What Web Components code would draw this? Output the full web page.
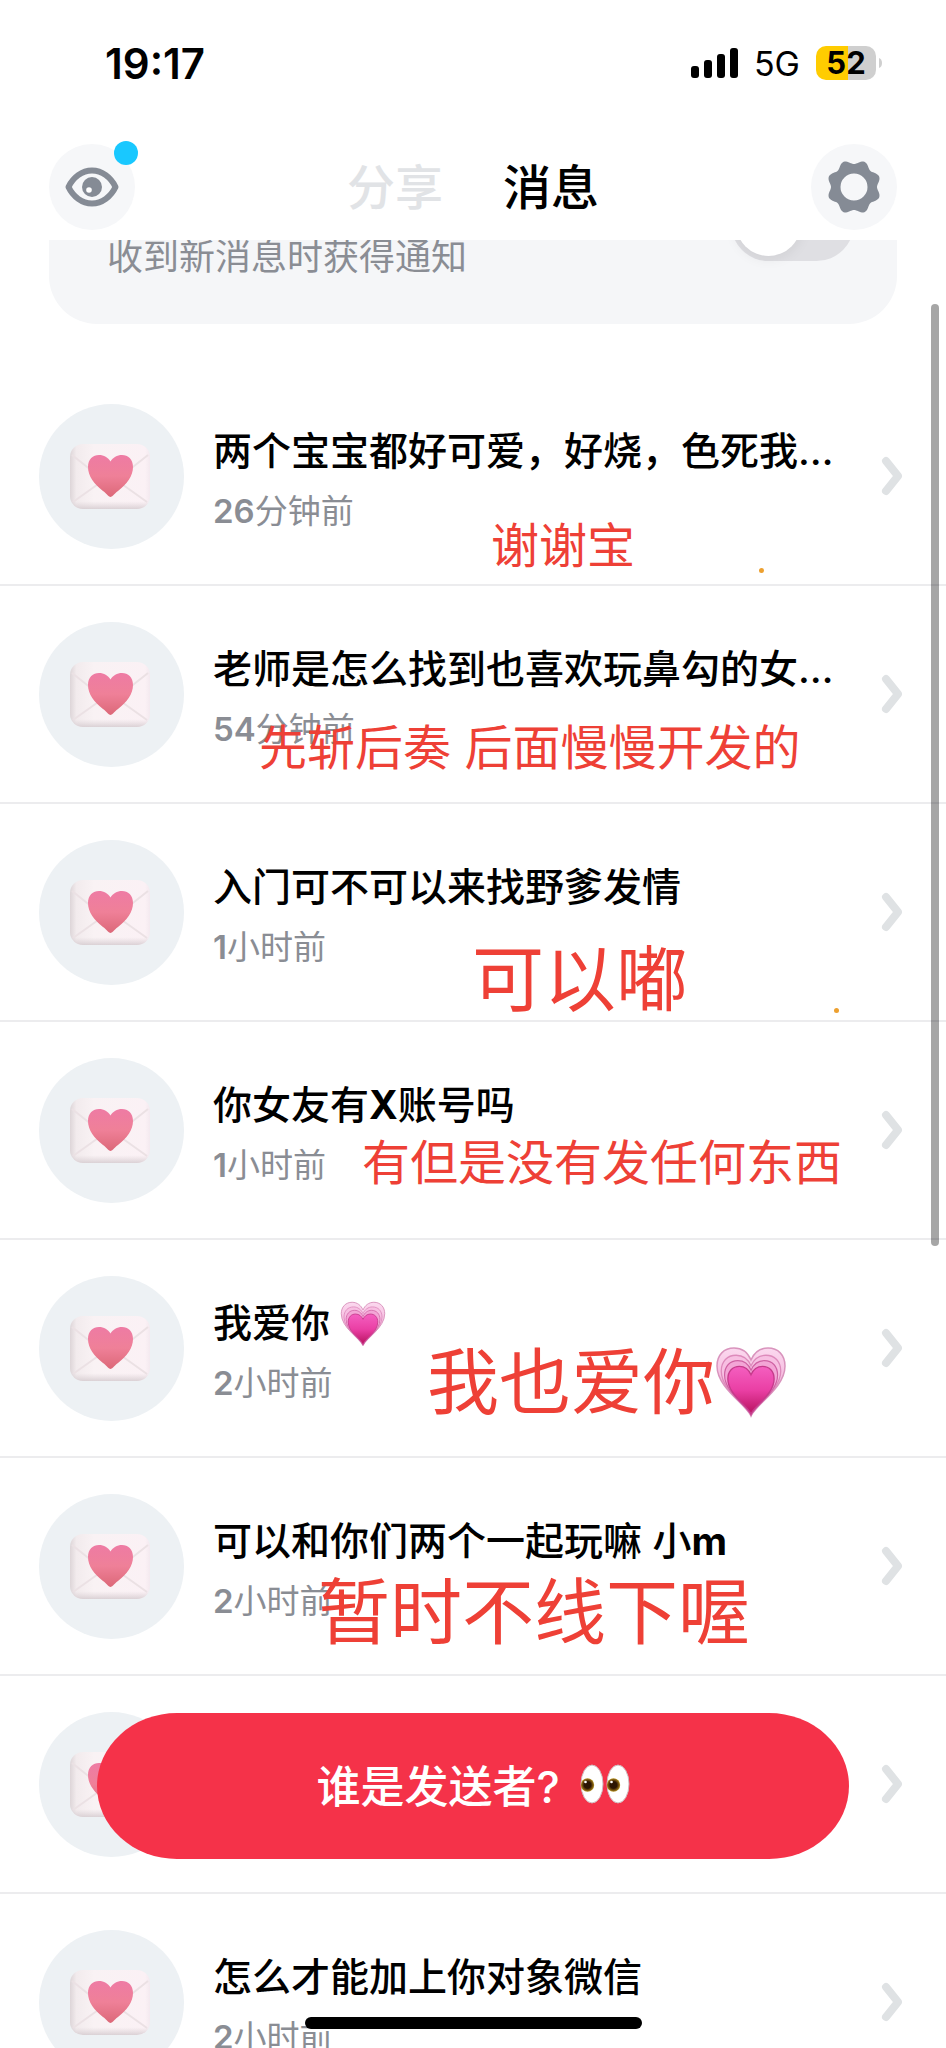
<!DOCTYPE html>
<html lang="zh-CN">
<head>
<meta charset="utf-8">
<meta name="viewport" content="width=device-width, initial-scale=1">
<title>消息</title>
<style>
  html, body { margin: 0; height: 100%; background: #fff; }
  body { font-family: Inter, "Noto Sans CJK SC", sans-serif; color: #000; }
</style>
</head>
<body>
<inbox-app>
  <status-bar slot="status" time="19:17" network="5G" battery="52"></status-bar>
  <nav-header slot="header"></nav-header>
  <notify-card>收到新消息时获得通知</notify-card>
  <message-row time="<b>26</b>分钟前">两个宝宝都好可爱，好烧，色死我…
    <hand-note slot="note" style="--x:491px;--y:142px">谢谢宝</hand-note>
    <ink-dot slot="note" style="--x:759px;--y:200px"></ink-dot>
  </message-row>
  <message-row time="<b>54</b>分钟前">老师是怎么找到也喜欢玩鼻勾的女…
    <hand-note slot="note" style="--x:259px;--y:126px">先斩后奏 后面慢慢开发的</hand-note>
  </message-row>
  <message-row time="<b>1</b>小时前">入门可不可以来找野爹发情
    <hand-note slot="note" large style="--x:472px;--y:121px">可以嘟</hand-note>
    <ink-dot slot="note" style="--x:834px;--y:204px"></ink-dot>
  </message-row>
  <message-row time="<b>1</b>小时前">你女友有<b>X</b>账号吗
    <hand-note slot="note" style="--x:362px;--y:105px">有但是没有发任何东西</hand-note>
  </message-row>
  <message-row time="<b>2</b>小时前">我爱你 <growing-heart></growing-heart>
    <hand-note slot="note" large style="--x:427px;--y:88px">我也爱你<growing-heart></growing-heart></hand-note>
  </message-row>
  <message-row time="<b>2</b>小时前">可以和你们两个一起玩嘛 小<b>m</b>
    <hand-note slot="note" large style="--x:318px;--y:100px">暂时不线下喔</hand-note>
  </message-row>
  <message-row></message-row>
  <message-row time="<b>2</b>小时前">怎么才能加上你对象微信</message-row>
  <reveal-button slot="action">谁是发送者?</reveal-button>
</inbox-app>

<script>
const define = (name, html, setup) => {
  const template = document.createElement('template');
  template.innerHTML = html;
  customElements.define(name, class extends HTMLElement {
    connectedCallback() {
      if (this.shadowRoot) return;
      this.attachShadow({ mode: 'open' }).append(template.content.cloneNode(true));
      if (setup) setup(this, this.shadowRoot);
    }
  });
};

define('inbox-app', `
<style>
  :host { display: flex; flex-direction: column; height: 100vh; position: relative; overflow: hidden; }
  main { flex: 1; min-height: 0; overflow: hidden; }
  .thumb { position: absolute; right: 7px; top: 304px; width: 8px; height: 46%; border-radius: 4px; background: rgba(0,0,0,.35); }
  .home { position: absolute; bottom: 19px; left: 50%; width: 337px; height: 12px; margin-left: -168px; border-radius: 6px; background: #000; }
</style>
<slot name="status"></slot>
<slot name="header"></slot>
<main><slot></slot></main>
<slot name="action"></slot>
<div class="thumb"></div>
<div class="home"></div>`);

define('status-bar', `
<style>
  :host { display: flex; align-items: center; justify-content: space-between; height: 126px; padding: 0 64px 0 105px; box-sizing: border-box; }
  .time { font-size: 42px; font-weight: 600; }
  .right { display: flex; align-items: center; }
  .net { font-size: 34px; margin: 0 16px 0 15px; }
  .battery { width: 60px; height: 34px; border-radius: 10px; background: linear-gradient(90deg, #ffcc00 32px, #cfcfcf 32px); font-size: 31px; line-height: 34px; font-weight: 700; text-align: center; }
  svg { display: block; }
</style>
<span class="time"></span>
<div class="right">
  <svg width="48" height="32" viewBox="0 0 48 32"><rect x="0" y="19" width="8" height="12" rx="3"/><rect x="13" y="13" width="8" height="18" rx="3"/><rect x="26" y="7" width="8" height="24" rx="3"/><rect x="39" y="1" width="8" height="30" rx="3"/></svg>
  <span class="net"></span>
  <span class="battery"></span>
  <svg width="6" height="10" viewBox="0 0 6 10"><path d="M3 0Q6 1 6 5Q6 9 3 10Z" fill="#cfcfcf"/></svg>
</div>`, (el, root) => {
  root.querySelector('.time').textContent = el.getAttribute('time');
  root.querySelector('.net').textContent = el.getAttribute('network');
  root.querySelector('.battery').textContent = el.getAttribute('battery');
});

define('nav-header', `
<style>
  :host { display: flex; align-items: flex-start; justify-content: space-between; height: 114px; padding: 18px 49px 0; box-sizing: border-box; }
  button { border: 0; padding: 0; font: inherit; color: inherit; background: none; }
  .round { position: relative; width: 86px; height: 86px; border-radius: 50%; background: #f6f7f9; }
  .round svg { display: block; }
  .badge { position: absolute; right: -3px; top: -3px; width: 24px; height: 24px; border-radius: 50%; background: #19c8ff; }
  nav { display: flex; gap: 60px; }
  nav button { font-size: 48px; line-height: 88px; font-weight: 500; }
  nav .off { color: #e1e3e6; }
</style>
<button class="round" aria-label="浏览">
  <svg width="86" height="86" viewBox="0 0 86 86" fill="none"><path d="M19.500 43C24 33.500 33 26.500 43 26.500S62 33.500 66.500 43C62 52.500 53 59.500 43 59.500S24 52.500 19.500 43Z" stroke="#858b95" stroke-width="6" stroke-linejoin="round"/><circle cx="43" cy="43" r="10" fill="#858b95"/><circle cx="40" cy="46" r="2.800" fill="#fff"/></svg>
  <span class="badge"></span>
</button>
<nav><button class="off">分享</button><button>消息</button></nav>
<button class="round" aria-label="设置">
  <svg width="86" height="86" viewBox="0 0 86 86"><path class="gear" fill="#858b95" fill-rule="evenodd"/></svg>
</button>`, (el, root) => {
  let d = '';
  for (let i = 0; i < 144; i++) {
    const a = i * Math.PI / 72;
    const r = 25.1 - 2.1 * Math.cos(8 * a);
    d += (i ? 'L' : 'M') + (43 + r * Math.cos(a)).toFixed(2) + ' ' + (43 + r * Math.sin(a)).toFixed(2);
  }
  root.querySelector('.gear').setAttribute('d', d + 'ZM29.500 43a13.500 13.500 0 1 0 27 0a13.500 13.500 0 1 0 -27 0Z');
});

define('notify-card', `
<style>
  :host { display: flex; align-items: flex-end; justify-content: space-between; margin: -60px 49px 44px; padding: 6px 43px 40px 58px; border-radius: 48px; background: #f5f6f8; }
  label { font-size: 36px; line-height: 54px; color: #8a8d94; font-weight: 400; }
  input { appearance: none; width: 123px; height: 75px; margin: 0 0 23px; border-radius: 38px; background: #dfdfe3; display: flex; align-items: center; padding: 0 5px; box-sizing: border-box; }
  input::before { content: ""; width: 65px; height: 65px; border-radius: 50%; background: #fff; box-shadow: 0 2px 14px rgba(0,0,0,.08); }
</style>
<label for="notify"><slot></slot></label><input id="notify" type="checkbox" role="switch">`);

define('message-row', `
<style>
  :host { display: flex; align-items: center; position: relative; height: 218px; box-sizing: border-box; padding: 0 43px 0 39px; border-bottom: 2px solid #ececee; }
  .avatar { flex: none; width: 145px; height: 145px; margin-right: 29px; border-radius: 50%; background: #edf1f4; }
  .text { flex: 1; min-width: 0; white-space: nowrap; padding-top: 6px; }
  .title { font-size: 39px; line-height: 56px; font-weight: 500; height: 56px; }
  .time { font-size: 33px; line-height: 48px; height: 48px; margin-top: 8px; color: #8a8d94; }
  .time b { font-weight: 600; }
  svg { display: block; flex: none; }
</style>
<svg class="avatar" viewBox="0 0 145 145">
  <defs>
    <linearGradient id="paper" x1="0" x2="1" y1="0" y2="0"><stop offset="0" stop-color="#ddd5d8"/><stop offset=".08" stop-color="#f2ebed"/><stop offset=".3" stop-color="#f9f2f4"/><stop offset=".94" stop-color="#fbf1f5"/><stop offset="1" stop-color="#f3e9ef"/></linearGradient>
    <linearGradient id="base" x1="0" x2="0" y1="0" y2="1"><stop offset=".88" stop-color="#d9cfd3" stop-opacity="0"/><stop offset="1" stop-color="#d3c9cd" stop-opacity=".8"/></linearGradient>
    <linearGradient id="love" x1="0" x2="0" y1="0" y2="1"><stop offset="0" stop-color="#ee7ba4"/><stop offset=".5" stop-color="#ef8098"/><stop offset="1" stop-color="#dc6878"/></linearGradient>
  </defs>
  <rect x="31" y="40" width="80" height="65" rx="13" fill="url(#paper)"/>
  <path d="M33 51L62 74M109 51L80 74M34 98L62 78M108 98L80 78" stroke="#ebe1e4" stroke-width="2" fill="none"/>
  <rect x="31" y="40" width="80" height="65" rx="13" fill="url(#base)"/>
  <path d="M71.500 93C70 93 68 90 64 87C55 80 49 72 49 63C49 55 54 51 60 51C65 51 69 53.500 71.500 57.500C74 53.500 78 51 83 51C89 51 94 55 94 63C94 72 88 80 79 87C75 90 73 93 71.500 93Z" fill="url(#love)"/>
</svg>
<div class="text"><div class="title"><slot></slot></div><div class="time"></div></div>
<svg width="22" height="40" viewBox="0 0 22 40" fill="none"><path d="M5 5L17 20L5 35" stroke="#dfe2e4" stroke-width="8" stroke-linecap="round" stroke-linejoin="round"/></svg>
<slot name="note"></slot>`, (el, root) => {
  root.querySelector('.time').innerHTML = el.getAttribute('time') || '';
});

define('hand-note', `
<style>
  :host { display: block; position: absolute; left: var(--x); top: var(--y); white-space: nowrap; color: #ee4036; font-size: 48px; line-height: 72px; }
  :host([large]) { font-size: 72px; line-height: 108px; }
</style><slot></slot>`);

define('ink-dot', `
<style>
  :host { display: block; position: absolute; left: var(--x); top: var(--y); width: 5px; height: 5px; border-radius: 50%; background: #eda02f; }
</style>`);

define('growing-heart', `
<style>
  :host { display: inline-block; width: 1em; height: 1em; min-width: 46px; min-height: 46px; vertical-align: -10px; }
  svg { display: block; width: 100%; height: 100%; min-width: 46px; min-height: 46px; overflow: visible; }
</style>
<svg viewBox="0 0 72 72" role="img" aria-label="心">
  <defs>
    <linearGradient id="g" x1="0" x2="0" y1="0" y2="1"><stop offset="0" stop-color="#f45fc0"/><stop offset=".5" stop-color="#ea3fa4"/><stop offset="1" stop-color="#b8125f"/></linearGradient>
    <linearGradient id="o" x1="0" x2="0" y1="0" y2="1"><stop offset="0" stop-color="#fbd9ef"/><stop offset=".6" stop-color="#f5b0da"/><stop offset="1" stop-color="#d983b4"/></linearGradient>
    <path id="h" d="M36 70C31 58 2 42 2 20C2 9 9 2 19 2C27 2 33 7 36 14C39 7 45 2 53 2C63 2 70 9 70 20C70 42 41 58 36 70Z"/>
  </defs>
  <use href="#h" fill="url(#o)" stroke="#d994bd" stroke-width="1.500"/>
  <use href="#h" transform="translate(4.500 7.500) scale(.875 .88)" fill="#f7bfe2" stroke="#dd8abb" stroke-width="1.500"/>
  <use href="#h" transform="translate(8 13) scale(.78 .8)" fill="#f3a5d6" stroke="#cf62a3" stroke-width="1.500"/>
  <use href="#h" transform="translate(11.500 19) scale(.68 .7)" fill="url(#g)" stroke="#c63a8b" stroke-width="2"/>
</svg>`);

define('reveal-button', `
<style>
  :host { display: block; position: absolute; left: 97px; right: 97px; bottom: 189px; }
  button { display: flex; align-items: center; justify-content: center; gap: 20px; width: 100%; height: 146px; border: 0; border-radius: 80px / 73px; background: #f53249; color: #fff; font: inherit; font-size: 44px; font-weight: 500; padding: 0 0 4px; }
  svg { display: block; }
</style>
<button><span><slot></slot></span>
<svg width="50" height="40" viewBox="0 0 50 40" role="img" aria-label="眼睛">
  <defs><radialGradient id="i"><stop offset=".5" stop-color="#2c1503"/><stop offset=".75" stop-color="#6d4a0c"/><stop offset="1" stop-color="#b49124"/></radialGradient></defs>
  <g id="e"><ellipse cx="12" cy="20" rx="11" ry="19" fill="#fff" stroke="#cdb9bd"/><circle cx="7.500" cy="21" r="6.700" fill="url(#i)"/><circle cx="5.500" cy="18" r="1.300" fill="#fff"/></g>
  <use href="#e" x="26"/>
</svg></button>`);
</script>
</body>
</html>
